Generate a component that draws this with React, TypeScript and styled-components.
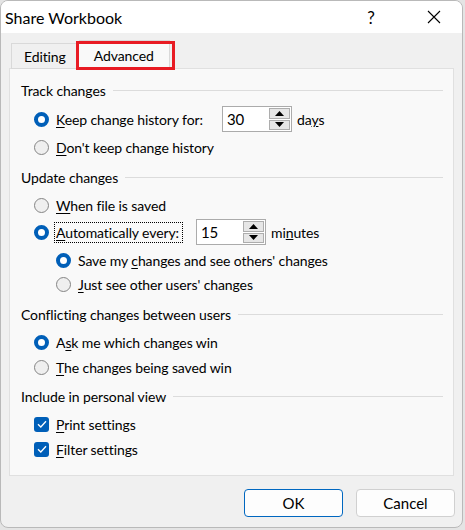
import React from "react";
import styled, { createGlobalStyle } from "styled-components";

const GlobalStyle = createGlobalStyle`
  html, body {
    margin: 0;
    padding: 0;
    background: #e4e4e4;
  }
  body {
    font-family: "Lato", "Noto Sans", sans-serif;
    font-size: 14px;
    letter-spacing: -0.1px;
    color: #000;
  }
`;

const Window = styled.div`
  width: 463px;
  height: 528px;
  box-sizing: border-box;
  border: 1px solid #b9b9b9;
  border-radius: 8px;
  overflow: hidden;
  background: #f0f0f0;
  display: flex;
  flex-direction: column;
`;

const TitleBar = styled.div`
  height: 32px;
  background: #fff;
  display: flex;
  align-items: center;
  padding-left: 4px;
`;

const Title = styled.div`
  flex: 1;
  font-size: 16px;
  letter-spacing: 0;
`;

const HelpGlyph = styled.div`
  width: 20px;
  font-size: 17px;
  margin-right: 46px;
  text-align: center;
`;

const CloseBox = styled.div`
  width: 14px;
  height: 14px;
  margin-right: 21px;
  display: flex;
`;

const Body = styled.div`
  flex: 1;
  display: flex;
  flex-direction: column;
  padding: 8px 8px 0 8px;
`;

const TabStrip = styled.div`
  position: relative;
  display: flex;
  align-items: flex-end;
  height: 28px;
  padding-left: 2px;
  margin-bottom: -1px;
  z-index: 1;
`;

const Tab = styled.div<{ $active?: boolean }>`
  box-sizing: border-box;
  height: ${(p) => (p.$active ? "29px" : "26px")};
  padding: 0 ${(p) => (p.$active ? "15px" : "12px")};
  display: flex;
  align-items: center;
  padding-top: ${(p) => (p.$active ? "0" : "1px")};
  background: ${(p) => (p.$active ? "#f9f9f9" : "#f0f0f0")};
  border: 1px solid #d9d9d9;
  border-bottom: ${(p) => (p.$active ? "none" : "1px solid #d9d9d9")};
  border-left: ${(p) => (p.$active ? "none" : "1px solid #d9d9d9")};
`;

const Marker = styled.div`
  position: absolute;
  left: 67px;
  top: 0;
  width: 99px;
  height: 29px;
  box-sizing: border-box;
  border: 3px solid #e81b23;
  pointer-events: none;
`;

const Panel = styled.div`
  height: 408px;
  box-sizing: border-box;
  background: #f9f9f9;
  border: 1px solid #e0e0e0;
  padding: 9px 10px 0 11px;
  display: flex;
  flex-direction: column;
`;

const GroupHeader = styled.div<{ $mt: number }>`
  height: 24px;
  margin-top: ${(p) => p.$mt}px;
  display: flex;
  align-items: center;
  &::after {
    content: "";
    flex: 1;
    height: 1px;
    background: #dcdcdc;
    margin-left: 7px;
  }
`;

const Row = styled.div<{ $mt: number; $indent: number; $h?: number }>`
  height: ${(p) => p.$h ?? 24}px;
  margin-top: ${(p) => p.$mt}px;
  padding-left: ${(p) => p.$indent}px;
  display: flex;
  align-items: center;
`;

const Radio = styled.span<{ $checked?: boolean }>`
  box-sizing: border-box;
  width: 15px;
  height: 15px;
  border-radius: 50%;
  flex-shrink: 0;
  margin-right: 6px;
  background: ${(p) => (p.$checked ? "#fff" : "#efefef")};
  border: ${(p) => (p.$checked ? "4px solid #005fb8" : "1px solid #858585")};
`;

const Check = styled.span`
  box-sizing: border-box;
  width: 15px;
  height: 15px;
  border-radius: 3px;
  background: #005fb8;
  flex-shrink: 0;
  margin-right: 6px;
  display: flex;
  align-items: center;
  justify-content: center;
`;

const Label = styled.span<{ $focus?: boolean; $w?: number }>`
  white-space: nowrap;
  padding: 1px 1px;
  width: ${(p) => (p.$w ? `${p.$w}px` : "auto")};
  outline: ${(p) => (p.$focus ? "1px dotted #000" : "none")};
  outline-offset: 0;
  u {
    text-decoration-thickness: 1px;
    text-underline-offset: 2px;
  }
`;

const Spin = styled.div<{ $ml: number }>`
  margin-left: ${(p) => p.$ml}px;
  width: 70px;
  height: 26px;
  box-sizing: border-box;
  border: 1px solid #ababab;
  background: #fff;
  display: flex;
  align-items: stretch;
`;

const SpinValue = styled.div`
  flex: 1;
  padding-left: 4px;
  font-size: 15px;
  display: flex;
  align-items: center;
`;

const SpinButtons = styled.div`
  width: 21px;
  display: flex;
  flex-direction: column;
  gap: 1px;
  padding: 1px 1px 1px 0;
`;

const SpinBtn = styled.div`
  flex: 1;
  box-sizing: border-box;
  border: 1px solid #adadad;
  background: #e6e6e6;
  display: flex;
  align-items: center;
  justify-content: center;
`;

const Unit = styled.span`
  margin-left: 5px;
`;

const Footer = styled.div`
  display: flex;
  justify-content: flex-end;
  gap: 13px;
  padding: 13px 0 0 0;
  margin-right: -1px;
`;

const Button = styled.button<{ $default?: boolean }>`
  width: 99px;
  height: 28px;
  font-family: inherit;
  font-size: 15px;
  color: #000;
  background: #fdfdfd;
  border-radius: 4px;
  border: 1px solid ${(p) => (p.$default ? "#0067c0" : "#d0d0d0")};
  padding: 0;
`;

const Triangle: React.FC<{ up?: boolean }> = ({ up }) => (
  <svg width="9" height="5" viewBox="0 0 9 5">
    <path d={up ? "M0 5 L4.5 0 L9 5 Z" : "M0 0 L4.5 5 L9 0 Z"} fill="#000" />
  </svg>
);

const SpinBox: React.FC<{ value: string; ml: number }> = ({ value, ml }) => (
  <Spin $ml={ml}>
    <SpinValue>{value}</SpinValue>
    <SpinButtons>
      <SpinBtn>
        <Triangle up />
      </SpinBtn>
      <SpinBtn>
        <Triangle />
      </SpinBtn>
    </SpinButtons>
  </Spin>
);

const Tick = () => (
  <svg width="10" height="8" viewBox="0 0 10 8">
    <path d="M1 4.2 L3.8 7 L9 1.2" stroke="#fff" strokeWidth="1.3" fill="none" />
  </svg>
);

export default function App() {
  return (
    <>
      <GlobalStyle />
      <Window>
        <TitleBar>
          <Title>Share Workbook</Title>
          <HelpGlyph>?</HelpGlyph>
          <CloseBox>
            <svg width="14" height="14" viewBox="0 0 14 14">
              <path d="M1 1 L13 13 M13 1 L1 13" stroke="#000" strokeWidth="1.1" />
            </svg>
          </CloseBox>
        </TitleBar>
        <Body>
          <TabStrip>
            <Tab>Editing</Tab>
            <Tab $active>Advanced</Tab>
            <Marker />
          </TabStrip>
          <Panel>
            <GroupHeader $mt={0}>Track changes</GroupHeader>
            <Row $mt={4} $indent={13} $h={26}>
              <Radio $checked />
              <Label $w={152}>
                <u>K</u>eep change history for:
              </Label>
              <SpinBox value="30" ml={13} />
              <Unit>
                da<u>y</u>s
              </Unit>
            </Row>
            <Row $mt={3} $indent={13}>
              <Radio />
              <Label>
                <u>D</u>on't keep change history
              </Label>
            </Row>
            <GroupHeader $mt={6}>Update changes</GroupHeader>
            <Row $mt={4} $indent={13}>
              <Radio />
              <Label>
                <u>W</u>hen file is saved
              </Label>
            </Row>
            <Row $mt={2} $indent={13} $h={26}>
              <Radio $checked />
              <Label $focus $w={125}>
                <u>A</u>utomatically every:
              </Label>
              <SpinBox value="15" ml={14} />
              <Unit>
                mi<u>n</u>utes
              </Unit>
            </Row>
            <Row $mt={3} $indent={35}>
              <Radio $checked />
              <Label>
                Save my <u>c</u>hanges and see others' changes
              </Label>
            </Row>
            <Row $mt={0} $indent={35}>
              <Radio />
              <Label>
                <u>J</u>ust see other users' changes
              </Label>
            </Row>
            <GroupHeader $mt={6}>Conflicting changes between users</GroupHeader>
            <Row $mt={4} $indent={13}>
              <Radio $checked />
              <Label>
                A<u>s</u>k me which changes win
              </Label>
            </Row>
            <Row $mt={1} $indent={13}>
              <Radio />
              <Label>
                <u>T</u>he changes being saved win
              </Label>
            </Row>
            <GroupHeader $mt={5}>Include in personal view</GroupHeader>
            <Row $mt={4} $indent={13}>
              <Check>
                <Tick />
              </Check>
              <Label>
                <u>P</u>rint settings
              </Label>
            </Row>
            <Row $mt={1} $indent={13}>
              <Check>
                <Tick />
              </Check>
              <Label>
                <u>F</u>ilter settings
              </Label>
            </Row>
          </Panel>
          <Footer>
            <Button $default>OK</Button>
            <Button>Cancel</Button>
          </Footer>
        </Body>
      </Window>
    </>
  );
}
